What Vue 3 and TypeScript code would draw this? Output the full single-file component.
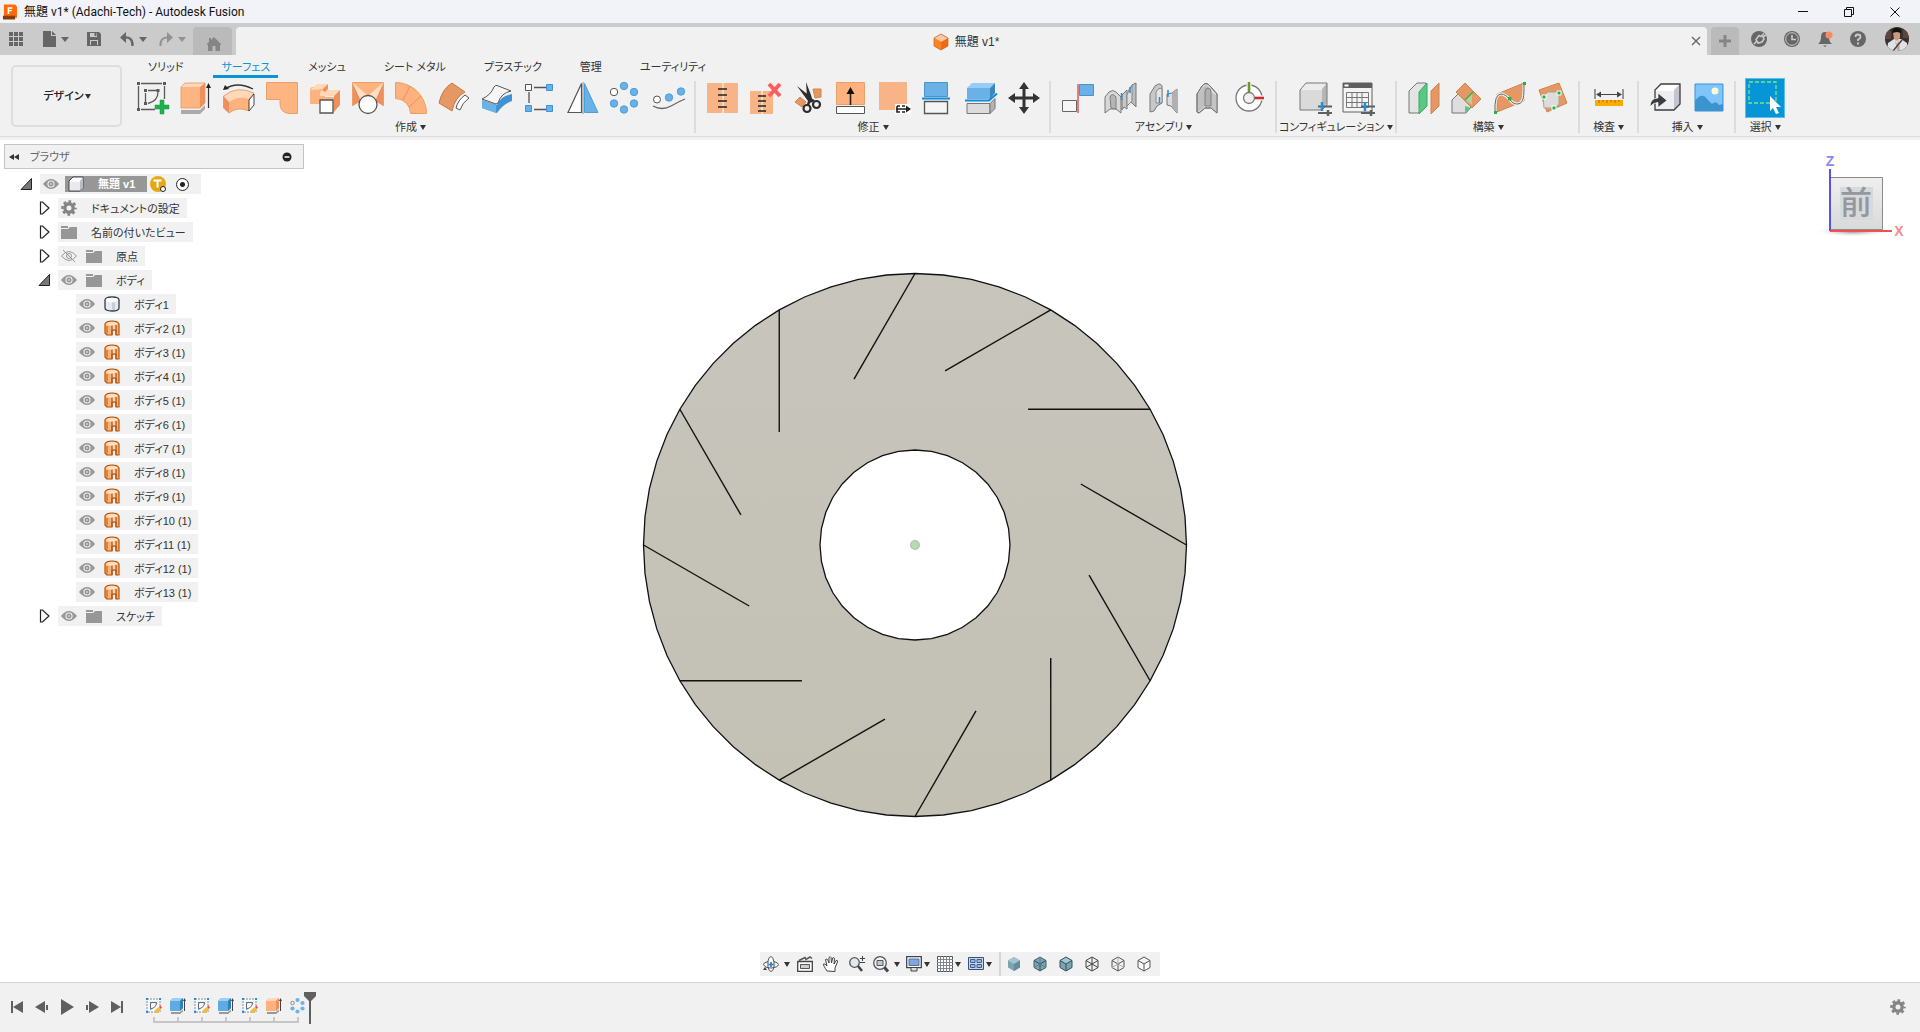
<script setup lang="ts">
import { ref } from 'vue'

interface TreeRow {
  level: number
  label: string
  icon: string
  expander?: 'open' | 'closed'
  eye?: 'on' | 'off'
}
interface ToolGroup {
  label: string
  tools: { icon: string; name: string }[]
  kind?: string
}

const hinge =
  '<path d="M6 30V12l5-8q4-5 8 0l7 8v19l-6-5h-6l-6 5z" fill="#dcdcdc" stroke="#777"/><path d="M19 10l7 3v18l-6-5z" fill="#c4c4c4"/><path d="M7 12l5-7q3-3 6 0l-4 4v15l-7 6z" fill="#c0c0c0"/><path d="M14 10q0-4 3-4t3 4v14h-6z" fill="#b0b0b0" stroke="#808080"/><path d="M6 30V12l5-8q4-5 8 0l7 8v19l-6-5h-6l-6 5z" fill="none" stroke="#777"/>'
const sliders =
  '<path d="M19 24.500h14M19 31h14" stroke="#606060" stroke-width="2"/><path d="M23 20v9" stroke="#1c8fe6" stroke-width="2.500"/><path d="M29 28v6" stroke="#606060" stroke-width="2.500"/>'

const icons: Record<string, string> = {
  sketch:
    '<g fill="none" stroke="#5a5a5a" stroke-width="1.300"><path d="M4 1.500h21M1.500 4v22M4 27.500h14M27.500 4v13M11 8.500h9M8.500 11v9M21 10q0 9-10 11.500"/></g><g fill="#5a5a5a"><path d="M0 0h3v3H0zM26 0h3v3h-3zM0 26h3v3H0zM7 7h3v3H7zM19.500 7h3v3h-3zM7 20h3v3H7z"/></g><path d="M23 18h4v5h5v4h-5v5h-4v-5h-5v-4h5z" fill="#21b04f" stroke="#139a40" stroke-width=".5"/>',
  extrude:
    '<path d="M1 28h19l5-5v4l-5 5H1z" fill="#aaa"/><path d="M1 5h19v21H1z" fill="#ffb581"/><path d="M1 5l4-4h20l-5 4z" fill="#ffd8b8"/><path d="M20 5l5-4v20l-5 5z" fill="#ef8f5e"/><path d="M1 5l4-4h20v20l-5 5H1z" fill="none" stroke="#e39a66" stroke-width=".8"/><path d="M28.500 5v21" stroke="#333" stroke-width="1.200"/><path d="M26 6l2.500-5L31 6z" fill="#222"/>',
  revolve:
    '<path d="M2 7Q14-1 30 7" fill="none" stroke="#333" stroke-width="1.300"/><path d="M0 8l2-5 4 4z" fill="#222"/><path d="M.5 14Q14 3 31 11l-5 6Q15 13 6 20z" fill="#ffd8b8"/><path d="M6 20q10-7 20-3v12Q15 24 6 31z" fill="#ffb27d"/><path d="M.5 14L6 20v11L.5 26z" fill="#ef8f5e"/><path d="M.5 14Q14 3 31 11l-5 6v12Q15 24 6 31L.5 26z" fill="none" stroke="#e0935c" stroke-width=".8"/><path d="M26 18l5-6v11l-5 6z" fill="#fff" stroke="#444"/>',
  patch: '<path d="M.5.5h31v31H23q-9-1-9-10v-4H.5z" fill="#ffb581" stroke="#e8a06b"/>',
  loft:
    '<path d="M1 8q0-3 3-3h12v10h9v15H11v-8H1z" fill="#ffb27d"/><path d="M1 8L8 2h11l-6 6h18l-6 6H11q-1-5 4-7z" fill="#ffd8b8"/><path d="M13 8l6-6v5l-3 3z" fill="#ef8f5e"/><path d="M25 14l6-6v15l-6 7z" fill="#ef8f5e"/><path d="M11 18h13v13H11z" fill="#fff" stroke="#555" stroke-width="1.300"/>',
  transition:
    '<path d="M.5.5h31V24L22 17H10L.5 24z" fill="#ffb27d"/><path d="M.5.500L9 19 .5 24zM31.500.500L23 19l8.500 5z" fill="#ef8f5e"/><path d="M.5.500L15 13l-6 6zM31.500.500L17 13l6 6z" fill="#ffe0c6"/><path d="M.5 24V.5h31V24" fill="none" stroke="#e8a06b"/><circle cx="16" cy="22.500" r="9" fill="#fff" stroke="#555" stroke-width="1.300"/>',
  sweep:
    '<path d="M.5.500A31 31 0 0 1 31.500 31.500h-16A15 15 0 0 0 .5 16.500z" fill="#ffb27d" stroke="#f09c5c"/><path d="M8 18l7-14M14 25l12-11" stroke="#e8935a" fill="none"/>',
  offset:
    '<path d="M1 21Q4 7 14 1l13 9Q17 15 14 29z" fill="#e59863" stroke="#c47a45"/><path d="M27 13l4 3q-7 5-9 12l-4-2q2-8 9-13z" fill="#fff" stroke="#555"/>',
  thicken:
    '<path d="M1 18l15 5q3-9 15-11v7q-9 3-15 12L1 26z" fill="#3d93d4"/><path d="M1 18l14 5v8L1 26z" fill="#69b1e6"/><path d="M1 17Q10 13 13 5q1-2 3-1.500L30 9q-10 2-13 12l-2 1z" fill="#f6f6f6" stroke="#555"/>',
  rectPattern:
    '<path d="M10 5.500h12M5 10v11M10 27.500h12" stroke="#555" stroke-width="1.300"/><path d="M1.500 2.500h6v6h-6z" fill="#fff" stroke="#555"/><g fill="#69b1e6" stroke="#3d93d4"><path d="M22.500 2.500h6v6h-6zM1.500 23.500h6v6h-6zM22.500 23.500h6v6h-6z"/></g>',
  mirror:
    '<path d="M14.500 1.500v29H1z" fill="#fff" stroke="#555" stroke-width="1.200"/><path d="M17.500 1.500v29H31z" fill="#69b1e6" stroke="#4a9fd8"/><path d="M16 0v32" stroke="#8a8a8a"/>',
  circPattern:
    '<g fill="#69b1e6" stroke="#4a9fd8"><circle cx="14" cy="4" r="3.700"/><circle cx="24" cy="10" r="3.700"/><circle cx="24" cy="21.500" r="3.700"/><circle cx="14" cy="27.500" r="3.700"/><circle cx="4" cy="21.500" r="3.700"/></g><circle cx="4" cy="10" r="3.700" fill="#fff" stroke="#555"/>',
  pathPattern:
    '<path d="M0 24q9 5 18 0t14-7" fill="none" stroke="#666" stroke-width="1.300"/><circle cx="4" cy="17.500" r="3.500" fill="#fff" stroke="#555"/><circle cx="16" cy="15.500" r="3.700" fill="#69b1e6" stroke="#4a9fd8"/><circle cx="28" cy="9.500" r="3.700" fill="#69b1e6" stroke="#4a9fd8"/>',
  stitch:
    '<path d="M0 1h31v30H0z" fill="#f8b486"/><path d="M16 1v30" stroke="#fff"/><path d="M11 7h9M11 13h9M11 19h9M11 25h9" stroke="#222" stroke-width="1.400"/>',
  unstitch:
    '<path d="M0 9h23v23H0z" fill="#f8b486"/><path d="M12 9v23" stroke="#fff"/><path d="M8 14h8M8 19h8M8 24h8M8 29h8" stroke="#222" stroke-width="1.400"/><path d="M19 2l11 12M30 2L19 14" stroke="#fb5e5e" stroke-width="4"/>',
  trim:
    '<path d="M20 7h8v8l-6 1zM7 15l6 5-4 5-7-5z" fill="#e59863" stroke="#cc8552"/><path d="M13 0l5 13 2 7-4 1-2-6zM4 4l14 11-3 4z" fill="#2d2d2d"/><g fill="none" stroke="#2d2d2d" stroke-width="2.200"><circle cx="14" cy="26.500" r="3.500"/><circle cx="23.500" cy="22.500" r="3.500"/></g><path d="M15 23l2-6 4 2" fill="none" stroke="#2d2d2d" stroke-width="2.500"/>',
  extend:
    '<path d="M.5.500h28v22H.5z" fill="#ffb27d" stroke="#e8a06b"/><path d="M.5 24.500h28v7H.5z" fill="#fff" stroke="#555"/><path d="M14.500 8v15" stroke="#222" stroke-width="1.600"/><path d="M10.500 12l4-7 4 7z" fill="#111"/>',
  edge:
    '<path d="M0 0h28v28H0z" fill="#f8b486"/><path d="M16 22h16v10H16z" fill="#fff"/><path d="M17 27h14M18 24v6h3M18 24h3M23 24h3M23 30h3" stroke="#222" stroke-width="1.600" fill="none"/><path d="M27 23.500l5 3.500-5 3.500z" fill="#222"/>',
  splitFace:
    '<path d="M2.500.500h23v14h-23z" fill="#69b1e6" stroke="#4a93c8"/><path d="M0 16.500h28" stroke="#0a8be0" stroke-width="2"/><path d="M2.500 19.500h23v12h-23z" fill="#f5f5f5" stroke="#555" stroke-width="1.300"/>',
  splitBody:
    '<path d="M2 6l5-5h23l-5 5z" fill="#96ccf5"/><path d="M2 6h23v11H2z" fill="#69b1e6"/><path d="M25 6l5-5v10l-5 6z" fill="#3d86be"/><path d="M0 18.500h24l8-7" fill="none" stroke="#0a8be0" stroke-width="2"/><path d="M2 21.500h23v10H2z" fill="#dcdcdc" stroke="#777"/><path d="M25 21.500l5-5v10l-5 5z" fill="#b4b4b4" stroke="#777"/>',
  move:
    '<path d="M16 5v22M5 16h22" stroke="#333" stroke-width="3"/><path d="M11 7l5-7 5 7zM11 25l5 7 5-7zM7 11l-7 5 7 5zM25 11l7 5-7 5z" fill="#333"/>',
  component:
    '<path d="M.5 18.500h14v11H.5z" fill="#f6f6f6" stroke="#666"/><path d="M16 2v29" stroke="#d83232" stroke-width="1.200"/><path d="M17.500 2.500h14v11h-14z" fill="#69b1e6" stroke="#4a93c8"/>',
  joint:
    '<path d="M31 25V1l-4 2-3 5v11l3 2z" fill="#bdbdbd" stroke="#777"/><path d="M22 27V8l-5 5v15l2-3z" fill="#c8c8c8" stroke="#777"/><path d="M24 8l-2 5v11l5-5V4z" fill="#dedede" stroke="#888"/><path d="M0 31V15l4-5q4-3 7 0l5 5v16l-5-4H5z" fill="#d8d8d8" stroke="#777"/><path d="M5 15q2-5 6 0v12l-5-1z" fill="#b5b5b5" stroke="#808080"/><path d="M16.500 11v7M25 5v6" stroke="#1c8fe6" stroke-width="1.500"/>',
  asBuilt:
    '<path d="M2 30V12l5-8q5-4 7 0v17l-5 3-3 5z" fill="#c8c8c8" stroke="#777"/><path d="M8 10q3-5 6-3v14H8z" fill="#e4e4e4" stroke="#888"/><path d="M29 31V7l-5 4-5 1v11l4 1z" fill="#dcdcdc" stroke="#777"/><path d="M29 31V7l-5 4v13z" fill="#b0b0b0"/><path d="M11.500 15v6M20 8v7" stroke="#1c8fe6" stroke-width="1.500"/>',
  jointOrigin: hinge,
  motion:
    '<circle cx="15" cy="16" r="13" fill="#fff" stroke="#777" stroke-width="1.300"/><circle cx="15" cy="16" r="5.500" fill="#f1f1f1" stroke="#777" stroke-width="1.300"/><path d="M15 1v9M21 16h9" fill="none" stroke="#f1f1f1" stroke-width="5"/><path d="M15 0v10" stroke="#6b9a23" stroke-width="2.500"/><path d="M21 16h9" stroke="#e02020" stroke-width="2.500"/>',
  configure:
    `<path d="M1 8l6-7h21l-5 6v21H1z" fill="#ececec"/><path d="M23 7l5-6v20l-5 7z" fill="#b5b5b5"/><path d="M1 8h22v20H1z" fill="#dadada"/><path d="M1 28V8l6-7h21v22l-5 5z" fill="none" stroke="#777"/>${sliders}`,
  configTable:
    `<path d="M1 1h29v29H1z" fill="#f4f4f4" stroke="#606060"/><path d="M1 1h29v5H1z" fill="#606060"/><path d="M2.500 2.500h4v2h-4z" fill="#fff"/><path d="M4.500 10.500h22v15h-22zM4.500 15.500h22M4.500 20.500h22M10 10v15M15 10v15M20 10v15" fill="none" stroke="#777"/>${sliders}`,
  planeOffset:
    '<path d="M1 9l8-8h9v23l-7 7H1z" fill="#e4e4e4" stroke="#777"/><path d="M11 10l8-9v23l-8 8z" fill="#58c884" stroke="#38a862"/><path d="M23 9l8-8v23l-8 8z" fill="#e59863" stroke="#cc8552"/>',
  planeAngle:
    '<path d="M1 31V18l6-6h14v12l-6 7z" fill="#dedede" stroke="#777"/><path d="M14 31V24l6 2z" fill="#58c884"/><path d="M5 10L14 1l16 16-9 9z" fill="#e59863" stroke="#cc8552"/><path d="M14 18l7-7v12z" fill="#b9cc9a"/><path d="M14 18l8-8" stroke="#2cb54f" stroke-width="1.500"/>',
  planeTangent:
    '<path d="M3 12l27-11v18L3 30z" fill="#e59863" stroke="#cc8552"/><path d="M1 31Q0 12 7 12c8 0 9 11 17 10 6-1 6-8 6-20" fill="none" stroke="#f1f1f1" stroke-width="3"/><path d="M1 31Q0 12 7 12c8 0 9 11 17 10 6-1 6-8 6-20" fill="none" stroke="#666"/><path d="M0 29h3v3H0zM29 0h3v3h-3zM14 15h3.500v3.500H14z" fill="#21b04f"/>',
  planePoints:
    '<path d="M2 8l20-7 8 20-20 9z" fill="#e59863" stroke="#cc8552"/><path d="M6 14l5-4h11v12l-4 4H7z" fill="#dddcd8" stroke="#a9a29a"/><path d="M5 13h4v4H5zM20 9h4v4h-4zM15 24h4v4h-4z" fill="#21b04f" stroke="#fff"/>',
  measure:
    '<path d="M2 7v10M30 7v10" stroke="#666" stroke-width="1.300"/><path d="M4 12.500h24" stroke="#444"/><path d="M3 12.500l5-3v6zM29 12.500l-5-3v6z" fill="#444"/><path d="M2 18h28v6H2z" fill="#ffab00"/><path d="M6 18v3M10 18v2M14 18v3M18 18v2M22 18v3M26 18v2" stroke="#a86c00"/>',
  insert:
    '<path d="M5 8l6-6h19v20l-6 6H5z" fill="#fff"/><path d="M24 8l6-6v20l-6 6z" fill="#c2c6cc"/><path d="M5 9h19v19H5z" fill="#eceef1"/><path d="M5 28V8l6-6h19v20l-6 6z" fill="none" stroke="#3a3d42" stroke-width="1.300"/><path d="M0 25q0-9 8-9v-5l9 7.500-9 7v-5q-5 0-8 4.500z" fill="#3a3d42" stroke="#fff" stroke-width=".7"/>',
  image:
    '<path d="M2 2h28v27H2z" fill="#7fc4fb" stroke="#3b93d0"/><circle cx="22" cy="9" r="3.500" fill="#fffbd0"/><path d="M2 29V19q7-10 13-1l4 4q4-4 7 1l4-1v7z" fill="#3b93d0"/>',
  select:
    '<path d="M0 0h27v21H0z" fill="none" stroke="#7be87b" stroke-width="1.300" stroke-dasharray="4 2"/><path d="M21 14v15l3-3 3 6 3-1-3-6h5z" fill="#fff"/>',

  cube:
    '<path d="M5 1h10v11l-3 3H1V5z" fill="#fff" stroke="#444" stroke-linejoin="round"/><path d="M12 5l3-4v11l-3 3z" fill="#b9bdc6"/><path d="M2 6h10v8H2z" fill="#e9eaee"/>',
  gear:
    '<circle cx="8" cy="8" r="4.200" fill="none" stroke="#858585" stroke-width="3.400"/><circle cx="8" cy="8" r="6.500" fill="none" stroke="#858585" stroke-width="2.600" stroke-dasharray="2.700 2.405" stroke-dashoffset="1.350"/>',
  folder: '<path d="M0 2h7v2H0zM0 5h7l2-2h7v12H0z" fill="#979797"/>',
  body:
    '<path d="M1 4q0-3 7-3t7 3v8q0 3-7 3T1 12z" fill="#e8eaf0" stroke="#333e50" stroke-width="1.300"/><path d="M8 6h3v8H8z" fill="#c9cdd6"/><ellipse cx="8" cy="4" rx="6" ry="2.300" fill="#fff"/>',
  surface:
    '<path d="M1 4q1-3 7-3t7 3v11h-3v-5H8v5H3l-2-2z" fill="#f7b57e" stroke="#b35209" stroke-width="1.200" stroke-linejoin="round"/><path d="M2 6h2v8l-2-2z" fill="#e8822f"/><path d="M2 4q1-2 6-2t6 2l-2 1-4 1Q4 6 2 4z" fill="#fde0c4"/><path d="M8 6h4v4H8z" fill="#f7d6b8"/><path d="M8 5.500v9.500M12 5v10M8 10h4" stroke="#b35209" stroke-width="1.200" fill="none"/>',
  eyeOn:
    '<path d="M0 8q8-10 16 0-8 10-16 0z" fill="#979797"/><circle cx="8" cy="8" r="3.600" fill="#f1f1f1"/><circle cx="8" cy="8" r="2.500" fill="#979797"/><circle cx="8" cy="8" r=".8" fill="#f1f1f1"/>',
  eyeOff:
    '<path d="M.5 8q7.500-9 15 0-7.500 9-15 0zM2 2l12 12" fill="none" stroke="#979797"/><circle cx="8" cy="8" r="2.500" fill="none" stroke="#979797"/>',

  grid: '<path d="M1 1h4v4H1zM6 1h4v4H6zM11 1h4v4h-4zM1 6h4v4H1zM6 6h4v4H6zM11 6h4v4h-4zM1 11h4v4H1zM6 11h4v4H6zM11 11h4v4h-4z" fill="#666"/>',
  file: '<path d="M2 0h8v5h5v11H2zM11 0l4 4h-4z" fill="#666"/>',
  save: '<path d="M1 1h12l2 2v12H1z" fill="#666"/><path d="M4 2h7v4H4zM4 9h8v5H4z" fill="#cbcbcb"/><path d="M8.500 2h2v3h-2zM5 10h6v4H5z" fill="#666"/>',
  undo: '<path d="M5 6.500q9-1 8.500 8.500" fill="none" stroke="#666" stroke-width="2.300"/><path d="M1 6.500L7 1v11z" fill="#666"/>',
  redo: '<path d="M11 6.500q-9-1-8.500 8.500" fill="none" stroke="#929292" stroke-width="2"/><path d="M15 6.500L9 1v11z" fill="#929292"/>',
  home: '<path d="M8 1l7 7v1h-1v6H9.500v-5h-3v5H2V9H1V8l2-2V2h2v2z" fill="#858585"/>',
  docCube: '<path d="M8 0l7 4v8l-7 4-7-4V4z" fill="#f26a10"/><path d="M8 0l7 4-7 4-7-4z" fill="#ffc9a3"/><path d="M1 4l7 4v8l-7-4z" fill="#ff8324"/><path d="M8 0l7 4v8l-7 4-7-4V4z" fill="none" stroke="#b9672f" stroke-width=".7"/>',
  close: '<path d="M4 4l8 8M12 4l-8 8" stroke="#666" stroke-width="1.400"/>',
  plus: '<path d="M6.500 2h3v4.500H14v3H9.500V14h-3V9.500H2v-3h4.500z" fill="#858585"/>',
  ext: '<circle cx="8" cy="8" r="8" fill="#666"/><path d="M13 2.500l-3 3-2-1-3 4 2 3.500 4-1 2-3-1-2 3-2M3 13l3-3" fill="none" stroke="#cbcbcb" stroke-width="1.600"/>',
  clock: '<circle cx="8" cy="8" r="8" fill="#666"/><circle cx="8" cy="8" r="6.300" fill="none" stroke="#cbcbcb"/><path d="M8 4v4.500h4" fill="none" stroke="#cbcbcb" stroke-width="1.600"/>',
  bell: '<path d="M1 13q3-2 3-7 0-5 4-5t4 5q0 5 3 7z" fill="#666"/><path d="M6 14.500h4l-2 1.500z" fill="#666"/><circle cx="12" cy="4" r="3.500" fill="#ff8a5c"/>',
  help: '<circle cx="8" cy="8" r="8" fill="#666"/><path d="M5.500 6q0-2.500 2.500-2.500T10.500 6q0 1.500-2.500 2.500v1.500" fill="none" stroke="#cbcbcb" stroke-width="1.800"/><path d="M7 11.500h2v2H7z" fill="#cbcbcb"/>',

  orbit: '<path d="M5 5q1-4.500 3-4.500T11 6v5q-1 4.500-3 4.500T5 11z" fill="#fff" stroke="#555"/><path d="M5 5.500Q0 7 .5 8.500 2 12 8 12q7-.5 7.500-3.500Q15 6.500 11 5.500" fill="none" stroke="#555"/><path d="M2 11l-2 3 4 0z" fill="#444"/><path d="M8 6v5M5.500 8.500h5" stroke="#1c7fe0" stroke-width="1.600"/>',
  lookAt: '<path d="M.7 5.500h14.600v9.800H.7z" fill="#fff" stroke="#444" stroke-width="1.300"/><path d="M3.500 8.500h9v4h-9z" fill="#c9cdd6" stroke="#555"/><path d="M2 4.500l6-3 1 2 4-2.500 2 1.500" fill="none" stroke="#555" stroke-width="1.500"/>',
  pan: '<path d="M4 15q-4-6-3.500-7 1.500-1 3.500 2L2.500 3.500q1.500-1.500 2.500 1L6 7V1.500q1.500-1.500 2 0L8.500 7l1.200-5q1.500-1 1.800.5L11 8l2-3.500q2-.5 1.500 1.500L12 12v3.500z" fill="#fff" stroke="#444"/>',
  zoom: '<circle cx="5.500" cy="6.500" r="4.800" fill="#dfe9ee" stroke="#555" stroke-width="1.300"/><path d="M9 10l4 5" stroke="#444" stroke-width="2.500"/><path d="M13.500 0v5M11 2.500h5M11 6.500h5" stroke="#444"/>',
  fit: '<circle cx="7" cy="7" r="6.300" fill="#eef4f6" stroke="#555" stroke-width="1.300"/><path d="M4 4.500h6v5H4z" fill="#b8ccd2" stroke="#555"/><path d="M11.500 11.500l3.500 4" stroke="#444" stroke-width="3"/>',
  display: '<path d="M.7.700h14.600v11H.7z" fill="#fff" stroke="#444" stroke-width="1.300"/><path d="M3 3h10v6.500H3z" fill="#7da7dd" stroke="#4a6ea5"/><path d="M5 12v3h6v-3" fill="#ddd" stroke="#444"/>',
  gridView: '<path d="M.5.500h15v15H.5z" fill="#fff" stroke="#555"/><path d="M3.500 0v16M6.500 0v16M9.500 0v16M12.500 0v16M0 3.500h16M0 6.500h16M0 9.500h16M0 12.500h16" stroke="#80868f"/>',
  viewports: '<path d="M.5 1.500h15v12H.5z" fill="#c8d6ea" stroke="#3c5070"/><path d="M2.500 3.500h4.500v3H2.500zM9 3.500h4.500v3H9zM2.500 8.500h4.500v3H2.500zM9 8.500h4.500v3H9z" fill="#9bb9e0" stroke="#3f5f94"/>',
  shaded: '<path d="M8 1l6 3.500v7L8 15l-6-3.500v-7z" fill="#7ba3b2"/><path d="M8 1l6 3.500L8 8 2 4.500z" fill="#a5c5ce"/><path d="M8 8l6-3.500v7L8 15z" fill="#648c9b"/>',
  shadedHidden: '<path d="M8 1l6 3.500v7L8 15l-6-3.500v-7z" fill="#7ba3b2" stroke="#46656f"/><path d="M2 4.500L8 8l6-3.500M8 8v7" fill="none" stroke="#34505a"/><path d="M8 1v7M2 11.500L8 8l6 3.500" fill="none" stroke="#5b7f8b"/>',
  shadedEdges: '<path d="M8 1l6 3.500v7L8 15l-6-3.500v-7z" fill="#7ba3b2"/><path d="M8 1l6 3.500L8 8 2 4.500z" fill="#a5c5ce"/><path d="M8 1l6 3.500v7L8 15l-6-3.500v-7zM2 4.500L8 8l6-3.500M8 8v7" fill="none" stroke="#34505a"/>',
  wire: '<path d="M8 1l6 3.500v7L8 15l-6-3.500v-7zM2 4.500L8 8l6-3.500M8 1v14M2 11.500L8 8l6 3.500" fill="none" stroke="#444"/>',
  wireHidden: '<path d="M8 1l6 3.500v7L8 15l-6-3.500v-7zM2 4.500L8 8l6-3.500M8 8v7" fill="none" stroke="#555"/><path d="M2 11.500L8 8l6 3.500M8 1v7" fill="none" stroke="#aaa"/>',
  wireVisible: '<path d="M8 1l6 3.500v7L8 15l-6-3.500v-7zM2 4.500L8 8l6-3.500M8 8v7" fill="#fdfdfd" stroke="#555"/>',

  toStart: '<path d="M3 2v12" stroke="#5f5f5f" stroke-width="2"/><path d="M14 2v12L4 8z" fill="#5f5f5f"/>',
  stepBack: '<path d="M11 2v12L1 8z" fill="#5f5f5f"/><path d="M13 6v5" stroke="#5f5f5f" stroke-width="2"/>',
  play: '<path d="M2 0v16l13-8z" fill="#5f5f5f"/>',
  stepNext: '<path d="M5 2v12l10-6z" fill="#5f5f5f"/><path d="M3 6v5" stroke="#5f5f5f" stroke-width="2"/>',
  toEnd: '<path d="M13 2v12" stroke="#5f5f5f" stroke-width="2"/><path d="M2 2v12l10-6z" fill="#5f5f5f"/>',
  tlSketch:
    '<path d="M1 1h13v13H1z" fill="#f8f8f8" stroke="#8a8a8a" stroke-dasharray="2 1"/><path d="M4.500 11V4.500h6q0 5-6 6.500" fill="none" stroke="#666"/><path d="M0 0h2v2H0zM13 0h2v2h-2zM0 13h2v2H0zM4 4h1.500v1.500H4zM9.500 4H11v1.500H9.500zM4 10h1.500v1.500H4z" fill="#1c8fe6"/><path d="M8 15l1-3 4-3 2 2-4 4z" fill="#f5b93c"/><path d="M13 9l1.500-1.500L16 9.500 15 11z" fill="#f0504a"/>',
  tlSolid:
    '<path d="M1 14h9l3-2.500v2L10 16H1z" fill="#999"/><path d="M0 3l3-3h10v10l-3 3H0z" fill="#5fabe2"/><path d="M0 3l3-3h10l-3 3z" fill="#9bd0f6"/><path d="M10 3l3-3v10l-3 3z" fill="#3080be"/><path d="M14.500 2v11" stroke="#444"/><path d="M13 3l1.500-3L16 3z" fill="#444"/>',
  tlSurface:
    '<path d="M1 14h9l3-2.500v2L10 16H1z" fill="#999"/><path d="M0 3l3-3h10v10l-3 3H0z" fill="#ffb27d"/><path d="M0 3l3-3h10l-3 3z" fill="#ffd8b8"/><path d="M10 3l3-3v10l-3 3z" fill="#ef8f5e"/><path d="M14.500 2v11" stroke="#444"/><path d="M13 3l1.500-3L16 3z" fill="#444"/>',
  tlPattern:
    '<g fill="#6db3e4"><circle cx="7.500" cy="2" r="2.100"/><circle cx="12.500" cy="5" r="2.100"/><circle cx="12.500" cy="10.500" r="2.100"/><circle cx="7.500" cy="13.500" r="2.100"/><circle cx="2.500" cy="10.500" r="2.100"/></g><circle cx="2.500" cy="5" r="1.700" fill="#fff" stroke="#666" stroke-width=".8"/>',
}

const workspace = ref('デザイン')
const activeTab = ref('サーフェス')
const tabs = ['ソリッド', 'サーフェス', 'メッシュ', 'シート メタル', 'プラスチック', '管理', 'ユーティリティ']

const t = (icon: string, name: string) => ({ icon, name })
const groups: ToolGroup[] = [
  {
    label: '作成',
    tools: [
      t('sketch', 'スケッチを作成'), t('extrude', '押し出し'), t('revolve', '回転'), t('patch', 'パッチ'),
      t('loft', 'スイープ'), t('transition', 'ロフト'), t('sweep', '延長パイプ'), t('offset', 'オフセット'),
      t('thicken', '厚み'), t('rectPattern', '矩形状パターン'), t('mirror', 'ミラー'),
      t('circPattern', '円形状パターン'), t('pathPattern', 'パスのパターン'),
    ],
  },
  {
    label: '修正',
    tools: [
      t('stitch', 'ステッチ'), t('unstitch', 'ステッチ解除'), t('trim', 'トリム'), t('extend', '延長'),
      t('edge', 'エッジ移動'), t('splitFace', '面を分割'), t('splitBody', 'ボディを分割'), t('move', '移動'),
    ],
  },
  {
    label: 'アセンブリ',
    tools: [
      t('component', '新規コンポーネント'), t('joint', 'ジョイント'), t('asBuilt', '位置固定ジョイント'),
      t('jointOrigin', 'ジョイントの原点'), t('motion', 'モーション'),
    ],
  },
  { label: 'コンフィギュレーション', kind: 'snug', tools: [t('configure', 'モデル設定'), t('configTable', 'テーブル')] },
  {
    label: '構築',
    tools: [
      t('planeOffset', 'オフセット平面'), t('planeAngle', '傾斜平面'), t('planeTangent', 'パスに沿った平面'),
      t('planePoints', '3点を通る平面'),
    ],
  },
  { label: '検査', kind: 'roomy', tools: [t('measure', '計測')] },
  { label: '挿入', tools: [t('insert', '派生を挿入'), t('image', 'キャンバス')] },
  { label: '選択', kind: 'active', tools: [t('select', '選択')] },
]

const rows: TreeRow[] = [
  { level: 1, label: 'ドキュメントの設定', icon: 'gear', expander: 'closed' },
  { level: 1, label: '名前の付いたビュー', icon: 'folder', expander: 'closed' },
  { level: 1, label: '原点', icon: 'folder', expander: 'closed', eye: 'off' },
  { level: 1, label: 'ボディ', icon: 'folder', expander: 'open', eye: 'on' },
  { level: 2, label: 'ボディ1', icon: 'body', eye: 'on' },
  ...Array.from({ length: 12 }, (_, i): TreeRow => ({
    level: 2, label: `ボディ${i + 2} (1)`, icon: 'surface', eye: 'on',
  })),
  { level: 1, label: 'スケッチ', icon: 'folder', expander: 'closed', eye: 'on' },
]

const navTools = [
  { icon: 'orbit', name: 'オービット', menu: true, wide: true },
  { icon: 'lookAt', name: 'ビュー正面' },
  { icon: 'pan', name: '画面移動' },
  { icon: 'zoom', name: 'ズーム' },
  { icon: 'fit', name: 'フィット', menu: true, wide: true },
  { icon: 'display', name: '表示設定', menu: true },
  { icon: 'gridView', name: 'グリッド', menu: true },
  { icon: 'viewports', name: 'ビューポート', menu: true },
]
const styleTools = ['shaded', 'shadedHidden', 'shadedEdges', 'wire', 'wireHidden', 'wireVisible']

const playback = [
  t('toStart', '先頭へ'), t('stepBack', '前へ'), t('play', '再生'), t('stepNext', '次へ'), t('toEnd', '末尾へ'),
]
const timeline = ['tlSketch', 'tlSolid', 'tlSketch', 'tlSolid', 'tlSketch', 'tlSurface', 'tlPattern']

const tick = (i: number) =>
  i === 0 ? 'M12 0V5H24' : i === timeline.length - 1 ? 'M0 5H12V0' : 'M0 5H24M12 0V5'

// Tessellated circle edge, as the viewport draws it.
function ring(radius: number, segments: number): string {
  const points: string[] = []
  for (let i = 0; i < segments; i++) {
    const a = (i * 2 * Math.PI) / segments
    points.push(`${(radius * Math.sin(a)).toFixed(2)} ${(-radius * Math.cos(a)).toFixed(2)}`)
  }
  return `M${points.join('L')}Z`
}
const outer = ring(271.5, 60)
const inner = ring(95, 36)
const blades = Array.from({ length: 12 }, (_, i) => i * 30)
</script>

<template>
  <div class="app">
    <header class="titlebar">
      <svg class="logo" viewBox="0 0 16 16">
        <path d="M2 0h12l2 2v12H2z" fill="#ff6b0a" />
        <path d="M1 12h13v4H1z" fill="#8a3a08" />
        <path d="M6 10V3h5v1.500H7.700v1.300h2.800v1.500H7.700V10z" fill="#fff" />
      </svg>
      <h1>無題 v1* (Adachi-Tech) - Autodesk Fusion</h1>
      <div class="window-buttons">
        <button aria-label="最小化"><svg viewBox="0 0 12 12"><path d="M1 5.500h10" /></svg></button>
        <button aria-label="元に戻す"><svg viewBox="0 0 12 12"><path d="M1.500 3.500h7v7h-7zM3.500 3V1.500h7v7H9" /></svg></button>
        <button aria-label="閉じる"><svg viewBox="0 0 12 12"><path d="M1.500 1.500l9 9M10.500 1.500l-9 9" /></svg></button>
      </div>
    </header>

    <div class="docbar">
      <div class="quick">
        <button aria-label="データパネル"><svg class="i16" viewBox="0 0 16 16" v-html="icons.grid" /></button>
        <button aria-label="ファイル"><svg class="i16" viewBox="0 0 16 16" v-html="icons.file" /><i class="caret big" /></button>
        <button aria-label="保存"><svg class="i16" viewBox="0 0 16 16" v-html="icons.save" /></button>
        <div class="history">
          <button aria-label="元に戻す"><svg class="i16" viewBox="0 0 16 16" v-html="icons.undo" /><i class="caret big" /></button>
          <button aria-label="やり直し"><svg class="i16" viewBox="0 0 16 16" v-html="icons.redo" /><i class="caret big dim" /></button>
        </div>
      </div>
      <button class="home-tab" aria-label="ホーム"><svg class="i16" viewBox="0 0 16 16" v-html="icons.home" /></button>
      <div class="doc-tab">
        <div class="doc-name"><svg class="i16" viewBox="0 0 16 16" v-html="icons.docCube" /><span>無題 v1*</span></div>
        <button aria-label="タブを閉じる"><svg class="i16" viewBox="0 0 16 16" v-html="icons.close" /></button>
      </div>
      <button class="new-tab" aria-label="新規"><svg class="i16" viewBox="0 0 16 16" v-html="icons.plus" /></button>
      <div class="account">
        <button v-for="n in ['ext', 'clock', 'bell', 'help']" :key="n" :aria-label="n">
          <svg class="i16" viewBox="0 0 16 16" v-html="icons[n]" />
        </button>
      </div>
      <button class="avatar" aria-label="アカウント">
        <svg viewBox="0 0 24 24">
          <path d="M0 0h24v24H0z" fill="#3a302c" />
          <path d="M0 4h6v8H0zM18 3h6v8h-6z" fill="#5b4740" />
          <path d="M2 24l1-8 6-4h7l6 4v8z" fill="#dfe2e6" />
          <path d="M8 5h7v6l-3 3-3-2z" fill="#c99b80" />
          <path d="M7 6q0-5 5-5t4 5l-4-1z" fill="#15110f" />
          <path d="M10 13l2 4 2-4 1 11h-3z" fill="#aab0b8" />
          <path d="M17 13L8 24" stroke="#6b3c28" stroke-width="1.500" />
        </svg>
      </button>
    </div>

    <div class="ribbon">
      <div class="workspace">
        <select v-model="workspace" aria-label="ワークスペース">
          <option>デザイン</option>
        </select>
        <i class="caret" />
      </div>
      <div class="ribbon-main">
        <nav class="tabs">
          <button v-for="tab in tabs" :key="tab" :class="{ on: tab === activeTab }" @click="activeTab = tab">{{ tab }}</button>
        </nav>
        <div class="tools">
          <section v-for="g in groups" :key="g.label" class="group" :class="g.kind">
            <div class="icons">
              <button v-for="tool in g.tools" :key="tool.icon" :aria-label="tool.name">
                <svg viewBox="0 0 32 32" v-html="icons[tool.icon]" />
              </button>
            </div>
            <button class="group-label">{{ g.label }}<i class="caret" /></button>
          </section>
        </div>
      </div>
    </div>

    <main class="canvas">
      <svg class="model" viewBox="-280 -280 560 560">
        <defs>
          <linearGradient id="face" x1="0" y1="0" x2="0" y2="1">
            <stop offset="0" stop-color="#c8c5bd" />
            <stop offset=".5" stop-color="#c5c2b8" />
            <stop offset="1" stop-color="#c3c0b4" />
          </linearGradient>
        </defs>
        <path :d="outer + inner" fill="url(#face)" fill-rule="evenodd" stroke="#111" stroke-width="1.300" />
        <path v-for="a in blades" :key="a" d="M0-271.500l-61 105.700" :transform="`rotate(${a})`" stroke="#111" stroke-width="1.400" />
        <circle r="4.300" fill="#b2e0ab" stroke="#b9b9b9" stroke-width="1.300" />
      </svg>

      <svg class="viewcube" viewBox="0 0 100 90">
        <defs>
          <linearGradient id="cubeFace" x1="0" y1="0" x2="0" y2="1">
            <stop offset="0" stop-color="#efefef" />
            <stop offset="1" stop-color="#d9d9d9" />
          </linearGradient>
          <radialGradient id="cubeShade">
            <stop offset="0" stop-color="#777" />
            <stop offset="1" stop-color="#fff" stop-opacity="0" />
          </radialGradient>
        </defs>
        <ellipse cx="43" cy="81" rx="38" ry="6" fill="url(#cubeShade)" />
        <path d="M20.500 27.500h52v52h-52z" fill="url(#cubeFace)" stroke="#8b8b8b" />
        <path d="M30 37h33v33H30z" fill="#d7dadd" />
        <text x="46" y="64" class="face-name">前</text>
        <path d="M20 19v62" stroke="#5a50e8" stroke-width="2" />
        <path d="M20 81h62" stroke="#f05050" stroke-width="2" />
        <text x="20" y="16" class="axis z">Z</text>
        <text x="89" y="86" class="axis x">X</text>
      </svg>

      <aside class="browser">
        <div class="browser-head">
          <button aria-label="折りたたむ"><svg class="fold" viewBox="0 0 12 8"><path d="M6 1v6L1 4zM11 1v6L6 4z" fill="#333" /></svg></button>
          <span>ブラウザ</span>
          <button aria-label="最小化"><svg class="minus" viewBox="0 0 10 10"><circle cx="5" cy="5" r="4.500" fill="#222" /><path d="M2.500 5h5" stroke="#fff" stroke-width="1.500" /></svg></button>
        </div>
        <ul class="tree">
          <li class="row level0">
            <svg class="exp" viewBox="0 0 12 14"><path d="M11.500 1.500v11H1z" fill="#777" stroke="#222" /></svg>
            <div class="pill">
              <button aria-label="表示"><svg class="i16" viewBox="0 0 16 16" v-html="icons.eyeOn" /></button>
              <span class="root"><svg class="i16" viewBox="0 0 16 16" v-html="icons.cube" /><b>無題 v1</b></span>
              <svg class="i16" viewBox="0 0 16 16">
                <circle cx="8" cy="8" r="8" fill="#e6a817" />
                <path d="M3.500 3.500h8v2h-3v6h-2v-6h-3z" fill="#fff" />
                <circle cx="13" cy="13" r="2.500" fill="#fff" stroke="#222" />
              </svg>
              <input type="radio" name="active" checked aria-label="コンポーネントをアクティブ化" />
            </div>
          </li>
          <li v-for="r in rows" :key="r.label" class="row" :class="'level' + r.level">
            <svg class="exp" viewBox="0 0 12 14">
              <path v-if="r.expander === 'open'" d="M11.500 1.500v11H1z" fill="#777" stroke="#222" />
              <path v-else-if="r.expander" d="M2.500 1h2l6.500 6-6.500 6h-2z" fill="#fafafa" stroke="#222" stroke-width="1.200" />
            </svg>
            <div class="pill">
              <button v-if="r.eye" aria-label="表示">
                <svg class="i16" viewBox="0 0 16 16" v-html="r.eye === 'on' ? icons.eyeOn : icons.eyeOff" />
              </button>
              <svg class="i16" viewBox="0 0 16 16" v-html="icons[r.icon]" />
              <span class="name">{{ r.label }}</span>
            </div>
          </li>
        </ul>
      </aside>

      <div class="navbar">
        <button v-for="n in navTools" :key="n.icon" :aria-label="n.name" :class="{ menu: n.menu, wide: n.wide }">
          <svg class="i16" viewBox="0 0 16 16" v-html="icons[n.icon]" /><i v-if="n.menu" class="caret" />
        </button>
        <span class="divider" />
        <button v-for="s in styleTools" :key="s" :aria-label="s">
          <svg class="i16" viewBox="0 0 16 16" v-html="icons[s]" />
        </button>
      </div>
    </main>

    <footer class="timeline">
      <div class="playback">
        <button v-for="p in playback" :key="p.icon" :aria-label="p.name">
          <svg class="i16" viewBox="0 0 16 16" v-html="icons[p.icon]" />
        </button>
      </div>
      <ol>
        <li v-for="(f, i) in timeline" :key="i">
          <svg class="i16" viewBox="0 0 16 16" v-html="icons[f]" />
          <svg class="tick" viewBox="0 0 24 6"><path :d="tick(i)" /></svg>
        </li>
      </ol>
      <svg class="marker" viewBox="0 0 12 32"><path d="M0 0h12v4L7 9v23H5V9L0 4z" fill="#5f5f5f" /></svg>
      <button class="settings" aria-label="設定"><svg class="i16" viewBox="0 0 16 16" v-html="icons.gear" /></button>
    </footer>
  </div>
</template>

<style>
body {
  margin: 0;
  background: #fff;
}
</style>

<style scoped>
.app {
  display: flex;
  flex-direction: column;
  min-height: 100vh;
  font: 11px/16px 'Liberation Sans', 'Noto Sans CJK JP', sans-serif;
  font-feature-settings: 'palt';
  color: #333;
}
button {
  display: flex;
  align-items: center;
  justify-content: center;
  padding: 0;
  border: 0;
  background: none;
  color: inherit;
  font: inherit;
  font-feature-settings: inherit;
  white-space: nowrap;
}
svg {
  display: block;
  flex: none;
}
.i16 {
  width: 16px;
  height: 16px;
  overflow: visible;
}
.caret {
  border: solid transparent;
  border-width: 5px 3px 0;
  border-top-color: #333;
}
.caret.big {
  border-width: 5px 4px 0;
  border-top-color: #666;
  margin-left: 4px;
}
.caret.dim {
  border-top-color: #929292;
}

.titlebar {
  display: flex;
  align-items: center;
  height: 23px;
  padding: 0 14px 0 2px;
  background: #f1f3f9;
}
.logo {
  width: 15px;
  height: 16px;
}
h1 {
  flex: 1;
  margin: 0 0 0 7px;
  font: 12px/18px Roboto, 'Noto Sans CJK JP', sans-serif;
  color: #111;
}
.window-buttons {
  display: flex;
  gap: 34px;
  padding-right: 5px;
}
.window-buttons svg {
  width: 12px;
  height: 12px;
  fill: none;
  stroke: #111;
}

.docbar {
  display: flex;
  align-items: flex-end;
  height: 32px;
  background: #cbcbcb;
}
.quick {
  display: flex;
  align-self: center;
  gap: 17px;
  padding-left: 8px;
}
.history {
  display: flex;
  gap: 11px;
}
.home-tab {
  width: 39px;
  height: 28px;
  margin: 0 4px 0 7px;
  padding: 5px 0 0 2px;
  border-radius: 4px 4px 0 0;
  background: #bababa;
}
.doc-tab {
  flex: 1;
  display: flex;
  align-items: center;
  height: 28px;
  padding-right: 3px;
  border-radius: 4px 4px 0 0;
  background: #f1f1f1;
}
.doc-name {
  flex: 1;
  display: flex;
  align-items: center;
  justify-content: center;
  gap: 6px;
  padding: 2px 0 0 8px;
  font-size: 12px;
}
.new-tab {
  width: 28px;
  height: 28px;
  margin-left: 4px;
  border-radius: 4px 4px 0 0;
  background: #bababa;
}
.account {
  display: flex;
  align-self: center;
  gap: 17px;
  margin: 0 19px 0 12px;
}
.avatar {
  align-self: center;
  margin-right: 11px;
  border-radius: 50%;
  overflow: hidden;
}
.avatar svg {
  width: 24px;
  height: 24px;
}

.ribbon {
  display: flex;
  border-bottom: 1px solid #dcdcdc;
  background: #f1f1f1;
}
.workspace {
  position: relative;
  box-sizing: border-box;
  width: 111px;
  height: 62px;
  margin: 10px 9px 0 11px;
  border: 2px solid #dedede;
  border-radius: 5px;
}
.workspace select {
  appearance: none;
  width: 100%;
  height: 100%;
  padding: 0 6px 0 0;
  border: 0;
  background: none;
  color: #222;
  font: inherit;
  font-feature-settings: inherit;
  font-weight: 500;
  text-align-last: center;
}
.workspace .caret {
  position: absolute;
  top: 27px;
  right: 29px;
}
.tabs {
  display: flex;
  gap: 22px;
  height: 23px;
  padding-left: 9px;
}
.tabs button {
  padding: 4px 8px 0;
  border-bottom: 3px solid transparent;
}
.tabs .on {
  border-color: #0696d7;
  color: #0696d7;
}
.tools {
  display: flex;
}
.group {
  position: relative;
  display: flex;
  flex-direction: column;
  align-items: center;
  padding: 0 6px 0 5px;
}
.group:first-child {
  padding-left: 0;
}
.group:not(:last-child)::after {
  content: '';
  position: absolute;
  top: 3px;
  right: 0;
  width: 2px;
  height: 52px;
  background: #dcdcdc;
}
.snug {
  padding: 0 4px 0 2px;
}
.roomy {
  padding: 0 9px 0 7px;
}
.icons {
  display: flex;
}
.icons button {
  width: 43px;
  height: 40px;
}
.icons svg {
  width: 32px;
  height: 32px;
  overflow: visible;
}
.active {
  padding-left: 9px;
}
.active .icons button {
  box-sizing: border-box;
  width: 40px;
  border: 1px solid #5fbbe8;
  background: #0696d7;
}
.group-label {
  gap: 3px;
  height: 18px;
}

.canvas {
  position: relative;
  flex: 1;
  display: flex;
  flex-direction: column;
  align-items: flex-start;
  border-top: 3px solid #f1f1f1;
}
.model {
  position: absolute;
  top: 125px;
  left: calc(50% - 325px);
  width: 560px;
  height: 560px;
}
.viewcube {
  position: absolute;
  top: 10px;
  right: 10px;
  width: 100px;
  height: 90px;
}
.face-name {
  font-size: 32px;
  font-weight: 500;
  text-anchor: middle;
  fill: #94989d;
}
.axis {
  font-size: 14px;
  font-weight: 700;
  text-anchor: middle;
}
.axis.z {
  fill: #8b86f0;
}
.axis.x {
  fill: #f48a8a;
}

.browser {
  position: relative;
}
.browser-head {
  box-sizing: border-box;
  display: flex;
  align-items: center;
  gap: 10px;
  width: 300px;
  height: 25px;
  margin: 4px 0 5px 4px;
  padding: 0 11px 0 3px;
  border: 1px solid #c4c4c4;
  background: #f1f1f1;
  color: #666;
}
.browser-head span {
  flex: 1;
}
.fold {
  width: 12px;
  height: 8px;
}
.minus {
  width: 10px;
  height: 10px;
}
.tree {
  display: flex;
  flex-direction: column;
  gap: 4px;
  margin: 0;
  padding: 0;
  list-style: none;
}
.row {
  display: flex;
  align-items: center;
  gap: 8px;
}
.level0 {
  padding-left: 20px;
}
.level1 {
  padding-left: 38px;
}
.level2 {
  padding-left: 56px;
}
.exp {
  width: 12px;
  height: 14px;
}
.pill {
  display: flex;
  align-items: center;
  gap: 9px;
  height: 20px;
  padding: 0 7px 0 3px;
  background: #f1f1f1;
}
.name {
  padding: 2px 0 0 5px;
  white-space: nowrap;
}
.level0 .pill {
  gap: 6px;
  padding-right: 12px;
}
.root {
  display: flex;
  align-items: center;
  gap: 14px;
  box-sizing: border-box;
  width: 82px;
  height: 16px;
  padding-left: 3px;
  background: #979797;
  color: #fff;
  white-space: nowrap;
}
.level0 .pill > svg {
  margin-left: -3px;
}
.level0 input {
  appearance: none;
  width: 13px;
  height: 13px;
  margin: 0 0 0 4px;
  border: 1px solid #222;
  border-radius: 50%;
  background: radial-gradient(circle, #222 2px, #fff 3px);
}

.navbar {
  display: flex;
  align-items: center;
  height: 24px;
  margin: auto auto 6px;
  padding-right: 3px;
  background: #f1f1f1;
}
.navbar button {
  width: 26px;
  height: 24px;
}
.navbar .menu {
  width: 31px;
  gap: 2px;
}
.navbar .wide {
  width: 32px;
  gap: 5px;
}
.divider {
  width: 2px;
  height: 24px;
  margin-left: 4px;
  background: #d6d6d6;
}

.timeline {
  display: flex;
  height: 49px;
  border-top: 1px solid #d4d4d4;
  background: #f1f1f1;
}
.playback {
  display: flex;
  height: 47px;
  padding-left: 4px;
}
.playback button {
  width: 25px;
}
.timeline ol {
  display: flex;
  margin: 0 0 0 13px;
  padding: 15px 0 0;
  list-style: none;
}
.timeline li {
  display: flex;
  flex-direction: column;
  align-items: center;
  gap: 3px;
  width: 24px;
}
.tick {
  width: 24px;
  height: 6px;
  fill: none;
  stroke: #c6c6c6;
  stroke-width: 2px;
}
.marker {
  width: 12px;
  height: 32px;
  margin: 9px 0 0 -6px;
}
.settings {
  height: 47px;
  margin: 0 14px 0 auto;
}
</style>
